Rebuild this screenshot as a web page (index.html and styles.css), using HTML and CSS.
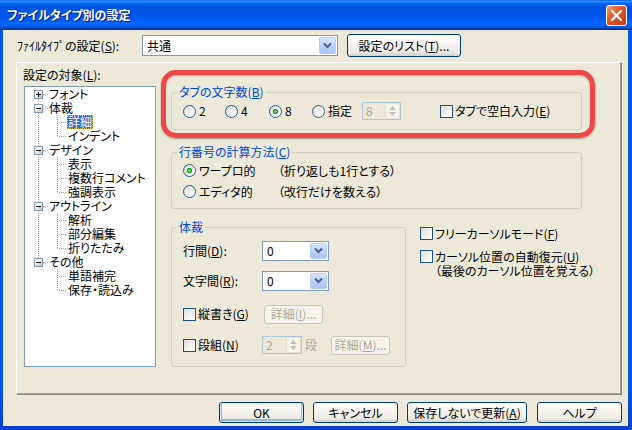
FILE: index.html
```html
<!DOCTYPE html>
<html lang="ja">
<head>
    <meta charset="UTF-8">
    <title>ファイルタイプ別の設定</title>
    <link rel="stylesheet" href="styles.css">
</head>
<body>
<div class="window">
    <div class="titlebar">
        <span class="title">ファイルタイプ別の設定</span>
        <span class="close">
            <svg width="11" height="11" viewBox="0 0 11 11"><path d="M1 1 10 10M10 1 1 10" stroke="#fff" stroke-width="2.2" stroke-linecap="square"/></svg>
        </span>
    </div>
    <div class="client">
        <div class="top-row">
            <span class="top-label">ﾌｧｲﾙﾀｲﾌﾟの設定(<u>S</u>):</span>
            <div class="combo wide">
                <span class="combo-text">共通</span>
                <span class="drop"><svg width="9" height="7" viewBox="0 0 9 7"><path d="M1 1.5 4.5 5 8 1.5" fill="none" stroke="#4d6185" stroke-width="2"/></svg></span>
            </div>
            <button class="btn list-btn">設定のリスト(<u>T</u>)...</button>
        </div>

        <div class="panel">
            <div class="highlight"></div>
            <div class="left-col">
                <div class="tree-label">設定の対象(<u>L</u>):</div>
                <div class="tree">
                    <div class="node"><span class="exp first"><i class="box plus"></i></span><span class="name">フォント</span></div>
                    <div class="node"><span class="exp mid"><i class="box"></i></span><span class="name">体裁</span></div>
                    <div class="node"><span class="cell pipe"></span><span class="cell tee"></span><span class="name sel">詳細</span></div>
                    <div class="node"><span class="cell pipe"></span><span class="cell ell"></span><span class="name">インデント</span></div>
                    <div class="node"><span class="exp mid"><i class="box"></i></span><span class="name">デザイン</span></div>
                    <div class="node"><span class="cell pipe"></span><span class="cell tee"></span><span class="name">表示</span></div>
                    <div class="node"><span class="cell pipe"></span><span class="cell tee"></span><span class="name">複数行コメント</span></div>
                    <div class="node"><span class="cell pipe"></span><span class="cell ell"></span><span class="name">強調表示</span></div>
                    <div class="node"><span class="exp mid"><i class="box"></i></span><span class="name">アウトライン</span></div>
                    <div class="node"><span class="cell pipe"></span><span class="cell tee"></span><span class="name">解析</span></div>
                    <div class="node"><span class="cell pipe"></span><span class="cell tee"></span><span class="name">部分編集</span></div>
                    <div class="node"><span class="cell pipe"></span><span class="cell ell"></span><span class="name">折りたたみ</span></div>
                    <div class="node"><span class="exp last"><i class="box"></i></span><span class="name">その他</span></div>
                    <div class="node"><span class="cell"></span><span class="cell tee"></span><span class="name">単語補完</span></div>
                    <div class="node"><span class="cell"></span><span class="cell ell"></span><span class="name">保存・読込み</span></div>
                </div>
            </div>

            <div class="right-col">
                <div class="group g1">
                    <span class="group-title">タブの文字数(<u>B</u>)</span>
                    <div class="row">
                        <span class="opt w42"><i class="radio"></i>2</span>
                        <span class="opt w44"><i class="radio"></i>4</span>
                        <span class="opt w43"><i class="radio on"></i>8</span>
                        <span class="opt w50"><i class="radio"></i>指定</span>
                        <span class="spin tab-spin">
                            <span class="spin-text">8</span>
                            <span class="spin-btns">
                                <svg width="7" height="4" viewBox="0 0 7 4"><path d="M0 4 3.5 0 7 4z" fill="#c5c2b2"/></svg>
                                <svg width="7" height="4" viewBox="0 0 7 4"><path d="M0 0 3.5 4 7 0z" fill="#c5c2b2"/></svg>
                            </span>
                        </span>
                        <span class="opt tab-space"><i class="check"></i>タブで空白入力(<u>E</u>)</span>
                    </div>
                </div>

                <div class="group g2">
                    <span class="group-title">行番号の計算方法(<u>C</u>)</span>
                    <div class="row first">
                        <span class="opt w95"><i class="radio on"></i>ワープロ的</span>
                        <span>（折り返しも1行とする）</span>
                    </div>
                    <div class="row">
                        <span class="opt w95"><i class="radio"></i>エディタ的</span>
                        <span>（改行だけを数える）</span>
                    </div>
                </div>

                <div class="bottom">
                    <div class="group g3">
                        <span class="group-title">体裁</span>
                        <div class="row r1">
                            <span class="field-label">行間(<u>D</u>):</span>
                            <div class="combo small">
                                <span class="combo-text">0</span>
                                <span class="drop"><svg width="9" height="7" viewBox="0 0 9 7"><path d="M1 1.5 4.5 5 8 1.5" fill="none" stroke="#4d6185" stroke-width="2"/></svg></span>
                            </div>
                        </div>
                        <div class="row r2">
                            <span class="field-label">文字間(<u>R</u>):</span>
                            <div class="combo small">
                                <span class="combo-text">0</span>
                                <span class="drop"><svg width="9" height="7" viewBox="0 0 9 7"><path d="M1 1.5 4.5 5 8 1.5" fill="none" stroke="#4d6185" stroke-width="2"/></svg></span>
                            </div>
                        </div>
                        <div class="row r3">
                            <span class="opt w81"><i class="check"></i>縦書き(<u>G</u>)</span>
                            <button class="btn off detail">詳細(<u>I</u>)...</button>
                        </div>
                        <div class="row r4">
                            <span class="opt w79"><i class="check"></i>段組(<u>N</u>)</span>
                            <span class="spin col-spin">
                                <span class="spin-text">2</span>
                                <span class="spin-btns">
                                    <svg width="7" height="4" viewBox="0 0 7 4"><path d="M0 4 3.5 0 7 4z" fill="#c5c2b2"/></svg>
                                    <svg width="7" height="4" viewBox="0 0 7 4"><path d="M0 0 3.5 4 7 0z" fill="#c5c2b2"/></svg>
                                </span>
                            </span>
                            <span class="dan">段</span>
                            <button class="btn off detail">詳細(<u>M</u>)...</button>
                        </div>
                    </div>

                    <div class="side">
                        <div class="side-item"><i class="check"></i>フリーカーソルモード(<u>F</u>)</div>
                        <div class="side-item second"><i class="check"></i><span>カーソル位置の自動復元(<u>U</u>)<br>（最後のカーソル位置を覚える）</span></div>
                    </div>
                </div>
            </div>
        </div>

        <div class="buttons">
            <button class="btn default w85">OK</button>
            <button class="btn w85">キャンセル</button>
            <button class="btn w120">保存しないで更新(<u>A</u>)</button>
            <button class="btn w85 help">ヘルプ</button>
        </div>
    </div>
</div>
</body>
</html>
```

FILE: styles.css
```css
* {
    margin: 0;
    padding: 0;
    box-sizing: border-box;
}
body {
    width: 632px;
    height: 430px;
    overflow: hidden;
    font-family: "Noto Sans CJK JP", "Liberation Sans", sans-serif;
    font-size: 12px;
    line-height: 14px;
    color: #000;
    font-feature-settings: "palt";
}
i {
    font-style: normal;
    display: block;
    flex: none;
}
.window {
    width: 632px;
    height: 430px;
    display: flex;
    flex-direction: column;
    background: linear-gradient(to bottom, #0055ea 90%, #0a3fcf);
}
.titlebar {
    height: 30px;
    flex: none;
    display: flex;
    align-items: center;
    justify-content: space-between;
    padding: 0 5px 0 7px;
    background: linear-gradient(to bottom, #0058ee 0%, #3593ff 4%, #288eff 6%, #127dff 8%, #036ffc 10%, #0262ee 14%, #0057e5 20%, #0054e3 24%, #0055eb 56%, #005bf5 66%, #026afe 76%, #0062ef 86%, #0052d6 92%, #0040ab 94%, #003092 100%);
}
.title {
    color: #fff;
    font-weight: bold;
    font-size: 12px;
    text-shadow: 1px 1px #0a1a8a;
}
.close {
    width: 21px;
    height: 21px;
    border: 1px solid #fff;
    border-radius: 3px;
    background: linear-gradient(135deg, #f3a080 0%, #e5602f 35%, #d4441a 75%, #c23b14 100%);
    display: flex;
    align-items: center;
    justify-content: center;
}
.client {
    flex: 1;
    margin: 0 4px 4px 3px;
    background: #ece9d8;
    display: flex;
    flex-direction: column;
}
u {
    text-decoration: underline;
    text-underline-offset: 1px;
}

/* top row */
.top-row {
    height: 23px;
    margin-top: 4px;
    display: flex;
    align-items: center;
    padding-left: 14px;
}
.top-label {
    width: 125px;
}
.combo {
    display: flex;
    align-items: center;
    border: 1px solid #7f9db9;
    background: #fff;
    padding: 1px;
}
.combo.wide {
    width: 196px;
    height: 21px;
}
.combo.small {
    width: 67px;
    height: 20px;
}
.combo-text {
    flex: 1;
    padding-left: 3px;
}
.drop {
    width: 17px;
    height: 100%;
    border: 1px solid #bacdf6;
    border-radius: 2px;
    background: linear-gradient(to bottom, #dbe6fe, #b8cdf9 60%, #aec4f6);
    display: flex;
    align-items: center;
    justify-content: center;
}
.btn {
    font: inherit;
    font-size: 12px;
    line-height: 14px;
    color: #000;
    height: 21px;
    border: 1px solid #003c74;
    border-radius: 3px;
    background: linear-gradient(to bottom, #ffffff 0%, #f5f4ef 40%, #ecebe5 80%, #d6d0c5 100%);
    display: flex;
    align-items: center;
    justify-content: center;
    flex: none;
}
.list-btn {
    width: 114px;
    height: 23px;
    margin-left: 9px;
}

/* panel */
.panel {
    position: relative;
    display: flex;
    width: 605px;
    height: 332px;
    margin: 5px 0 0 13px;
    border: 1px solid;
    border-color: #fff #aca899 #aca899 #fff;
    box-shadow: 1px 1px 0 #8a877a;
}
.highlight {
    position: absolute;
    left: 144px;
    top: 7px;
    width: 434px;
    height: 68px;
    border: 5px solid #ee4646;
    border-radius: 15px;
    box-shadow: 0 1px 2px rgba(0, 0, 0, 0.35), inset 0 1px 2px rgba(0, 0, 0, 0.25);
    pointer-events: none;
}
.left-col {
    margin: 5px 0 0 6px;
}
.tree-label {
    height: 14px;
}
.tree {
    width: 132px;
    height: 281px;
    margin: 4px 0 0 1px;
    padding-left: 4px;
    border: 1px solid #7f9db9;
    background: #fff;
}
.node {
    display: flex;
    height: 14px;
    white-space: nowrap;
}
.cell,
.exp {
    width: 19px;
    height: 14px;
    flex: none;
}
.pipe {
    background: repeating-linear-gradient(to bottom, #a0a0a0 0 1px, transparent 1px 2px) 9px 0 / 1px 14px no-repeat;
}
.tee {
    background:
        repeating-linear-gradient(to bottom, #a0a0a0 0 1px, transparent 1px 2px) 9px 0 / 1px 14px no-repeat,
        repeating-linear-gradient(to right, #a0a0a0 0 1px, transparent 1px 2px) 11px 7px / 8px 1px no-repeat;
}
.ell {
    background:
        repeating-linear-gradient(to bottom, #a0a0a0 0 1px, transparent 1px 2px) 9px 0 / 1px 8px no-repeat,
        repeating-linear-gradient(to right, #a0a0a0 0 1px, transparent 1px 2px) 11px 7px / 8px 1px no-repeat;
}
.exp {
    padding: 3px 0 0 5px;
    --h: repeating-linear-gradient(to right, #a0a0a0 0 1px, transparent 1px 2px) 14px 7px / 5px 1px no-repeat;
    --v: repeating-linear-gradient(to bottom, #a0a0a0 0 1px, transparent 1px 2px);
}
.exp.first {
    background: var(--h), var(--v) 9px 8px / 1px 6px no-repeat;
}
.exp.mid {
    background: var(--h), var(--v) 9px 0 / 1px 14px no-repeat;
}
.exp.last {
    background: var(--h), var(--v) 9px 0 / 1px 8px no-repeat;
}
.box {
    width: 9px;
    height: 9px;
    border: 1px solid #7898b5;
    background:
        linear-gradient(#000, #000) center / 5px 1px no-repeat,
        linear-gradient(135deg, #fff 30%, #c6bfae);
}
.box.plus {
    background:
        linear-gradient(#000, #000) center / 5px 1px no-repeat,
        linear-gradient(#000, #000) center / 1px 5px no-repeat,
        linear-gradient(135deg, #fff 30%, #c6bfae);
}
.name {
    padding: 0 1px;
    height: 14px;
}
.name.sel {
    background: #316ac5;
    color: #fff;
    outline: 1px dotted #e8c060;
    outline-offset: -1px;
}

/* right side */
.right-col {
    margin: 29px 0 0 15px;
}
.group {
    border: 1px solid #d0d0bf;
    border-radius: 3px;
}
.group-title {
    display: table;
    height: 14px;
    margin: -8px 0 0 5px;
    padding: 0 2px;
    background: #ece9d8;
    color: #0046d5;
}
.row {
    display: flex;
    align-items: center;
    padding-left: 11px;
}
.opt {
    display: flex;
    align-items: center;
    flex: none;
}
.w42 { width: 42px; }
.w43 { width: 43px; }
.w44 { width: 44px; }
.w50 { width: 50px; }
.w79 { width: 79px; }
.w81 { width: 81px; }
.w95 { width: 95px; }
.radio {
    width: 13px;
    height: 13px;
    margin-right: 3px;
    border: 1px solid #2c5a86;
    border-radius: 50%;
    background: linear-gradient(135deg, #d8d7cf, #fff 80%);
}
.radio.on {
    background:
        radial-gradient(circle, #5cd65c 0 1px, #21a121 1.6px 2.4px, transparent 3px),
        linear-gradient(135deg, #d8d7cf, #fff 80%);
}
.check {
    width: 13px;
    height: 13px;
    margin-right: 2px;
    border: 1px solid #1c5180;
    background: linear-gradient(135deg, #dcdcd6, #fff 85%);
}
.spin {
    display: flex;
    align-items: center;
    border: 1px solid #b5c5d8;
    color: #aca899;
    flex: none;
}
.spin-text {
    flex: 1;
    padding-left: 3px;
}
.spin-btns {
    width: 15px;
    height: 100%;
    display: flex;
    flex-direction: column;
    align-items: center;
    justify-content: center;
    gap: 2px;
    border: 1px solid #e3e1d6;
    border-radius: 2px;
    background: #f4f3ee;
}
.tab-spin {
    width: 39px;
    height: 18px;
}
.tab-space {
    margin-left: 39px;
}
.g1 {
    width: 411px;
    height: 38px;
}
.g1 .row {
    margin-top: 2px;
    height: 20px;
}
.g2 {
    width: 411px;
    height: 57px;
    margin-top: 22px;
}
.g2 .row {
    height: 21px;
}
.g2 .row.first {
    margin-top: 1px;
}
.bottom {
    display: flex;
    margin-top: 18px;
}
.g3 {
    width: 235px;
    height: 140px;
}
.field-label {
    width: 79px;
}
.r1 { margin-top: 6px; height: 21px; }
.r2 { margin-top: 9px; height: 21px; }
.r3 { margin-top: 13px; height: 20px; }
.r4 { margin-top: 11px; height: 20px; }
.btn.off {
    color: #aca899;
    border-color: #c9c7ba;
    background: #f5f4ea;
}
.detail {
    width: 59px;
    height: 19px;
}
.col-spin {
    width: 40px;
    height: 18px;
}
.dan {
    margin: 0 14px 0 3px;
    color: #aca899;
}
.side {
    margin-left: 14px;
}
.side-item {
    display: flex;
    align-items: flex-start;
}
.side-item.second {
    margin-top: 9px;
}

/* dialog buttons */
.buttons {
    display: flex;
    justify-content: flex-end;
    gap: 9px;
    margin-top: 8px;
    padding-right: 6px;
}
.w85 { width: 85px; }
.w120 { width: 120px; }
.help {
    margin-left: 1px;
}
.btn.default {
    box-shadow: inset 0 0 0 1px #cee7ff, inset 0 -1px 0 2px #98b8ea;
}
```
